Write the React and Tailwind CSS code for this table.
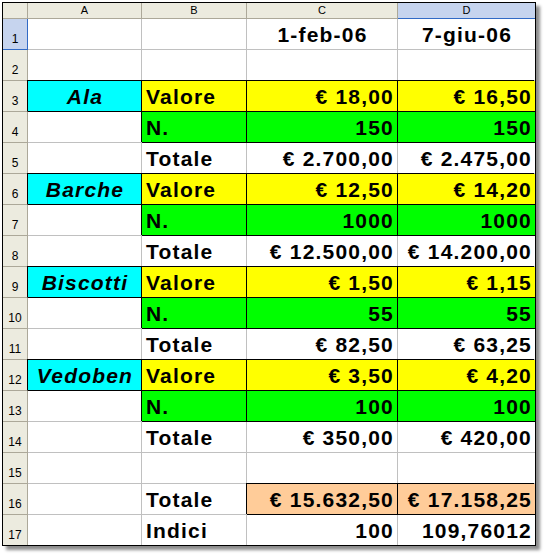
import React from "react";

const rows = [
  { n: 1, c: "1-feb-06", d: "7-giu-06", head: true },
  { n: 2 },
  { n: 3, a: "Ala", b: "Valore", c: "€ 18,00", d: "€ 16,50", fill: "yellow" },
  { n: 4, b: "N.", c: "150", d: "150", fill: "green" },
  { n: 5, b: "Totale", c: "€ 2.700,00", d: "€ 2.475,00" },
  { n: 6, a: "Barche", b: "Valore", c: "€ 12,50", d: "€ 14,20", fill: "yellow" },
  { n: 7, b: "N.", c: "1000", d: "1000", fill: "green" },
  { n: 8, b: "Totale", c: "€ 12.500,00", d: "€ 14.200,00" },
  { n: 9, a: "Biscotti", b: "Valore", c: "€ 1,50", d: "€ 1,15", fill: "yellow" },
  { n: 10, b: "N.", c: "55", d: "55", fill: "green" },
  { n: 11, b: "Totale", c: "€ 82,50", d: "€ 63,25" },
  { n: 12, a: "Vedoben", b: "Valore", c: "€ 3,50", d: "€ 4,20", fill: "yellow" },
  { n: 13, b: "N.", c: "100", d: "100", fill: "green" },
  { n: 14, b: "Totale", c: "€ 350,00", d: "€ 420,00" },
  { n: 15 },
  { n: 16, b: "Totale", c: "€ 15.632,50", d: "€ 17.158,25", fill: "orange", onlyCD: true },
  { n: 17, b: "Indici", c: "100", d: "109,76012" },
];

const fills = {
  yellow: "bg-[#ffff00] border-black shadow-[-1px_-1px_0_0_#000]",
  green: "bg-[#00ff00] border-black shadow-[-1px_-1px_0_0_#000]",
  orange: "bg-[#ffcc99] border-black shadow-[-1px_-1px_0_0_#000]",
  cyan: "bg-[#00ffff] border-black shadow-[-1px_-1px_0_0_#000]",
};

function Cell({ children, fill, align = "right", last, lastRow, italic }) {
  const alignCls =
    align === "left"
      ? "justify-start pl-[4px]"
      : align === "center"
      ? "justify-center pl-[1px]"
      : "justify-end pr-[3px]";
  return (
    <div
      className={`flex items-end pb-[2px] text-[21px] leading-[24px] font-bold tracking-[1.2px] whitespace-nowrap overflow-hidden ${alignCls} ${
        last ? "" : "border-r"
      } ${lastRow ? "" : "border-b"} ${fill ? fills[fill] : "border-[#c0c0c0] bg-white"} ${
        italic ? "italic" : ""
      }`}
    >
      {children}
    </div>
  );
}

export default function App() {
  return (
    <div className="w-[544px] h-[554px] bg-white pl-[2px] pt-[2px] font-['Liberation_Sans',Arial,sans-serif] text-black">
      <div className="grid grid-cols-[25px_114px_105px_151px_137px] grid-rows-[16px_repeat(16,31px)_30px] w-[534px] border border-black shadow-[4px_4px_3px_rgba(0,0,0,0.45)] bg-white">
        <div className="bg-[#ecebdf] border-r border-b border-[#aca899]" />
        {["A", "B", "C"].map((l) => (
          <div
            key={l}
            className="bg-[#ecebdf] border-r border-b border-[#aca899] flex items-center justify-center text-[11px] leading-none"
          >
            {l}
          </div>
        ))}
        <div className="bg-[#c6d4ee] border-b border-[#316ac5] flex items-center justify-center text-[11px] leading-none">
          D
        </div>

        {rows.map((r) => {
          const lastRow = r.n === 17;
          return (
            <React.Fragment key={r.n}>
              <div
                className={`flex items-end justify-center pb-[4px] text-[12px] leading-none ${
                  r.n === 1
                    ? "bg-[#c6d4ee] border-r border-b border-[#316ac5]"
                    : `bg-[#ecebdf] ${lastRow ? "" : "border-b"} ${
                        r.a ? "border-r border-r-black border-b-[#aca899]" : "border-r border-[#aca899]"
                      }`
                }`}
              >
                {r.n}
              </div>
              <Cell align="center" italic fill={r.a ? "cyan" : undefined} lastRow={lastRow}>
                {r.a}
              </Cell>
              <Cell align="left" fill={r.onlyCD ? undefined : r.fill} lastRow={lastRow}>
                {r.b}
              </Cell>
              <Cell align={r.head ? "center" : "right"} fill={r.fill} lastRow={lastRow}>
                {r.c}
              </Cell>
              <Cell align={r.head ? "center" : "right"} fill={r.fill} last lastRow={lastRow}>
                {r.d}
              </Cell>
            </React.Fragment>
          );
        })}
      </div>
    </div>
  );
}
